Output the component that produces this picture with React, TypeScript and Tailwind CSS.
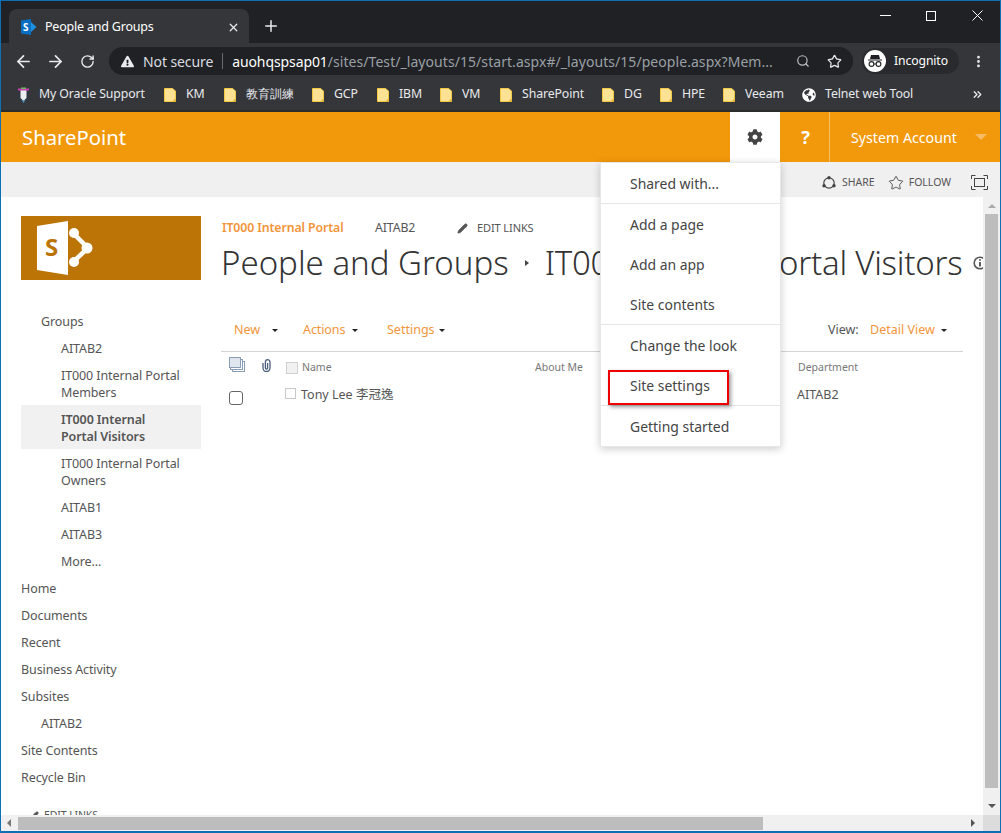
import { ArrowLeft, ArrowRight, RotateCw, Search, Star, Plus, X, MoreVertical, ChevronsRight, Pencil } from "lucide-react";
import { FaCog, FaGlobeAmericas, FaExclamationTriangle } from "react-icons/fa";

const ui = "font-['Noto_Sans','Open_Sans',sans-serif]";

function Folder() {
  return (
    <svg width="12" height="14" viewBox="0 0 12 14" className="shrink-0">
      <path d="M0.5 0.5H8.5L11.5 3V13.5H0.5Z" fill="#fde293" stroke="#f5c842" />
      <path d="M9 13L11.5 10.5V13.5H9Z" fill="#e0b030" />
    </svg>
  );
}

function SpLogo({ className, fg, accent }: { className?: string; fg: string; accent: string }) {
  return (
    <svg viewBox="0 0 56 54" className={className}>
      <path d="M0 5L31 0V54L0 49Z" fill={fg} />
      <text x="8" y="35" fontSize="24" fontWeight="700" fontFamily="Noto Sans" fill={accent}>S</text>
      <path d="M36 12L51 27L36 41" fill="none" stroke={fg} strokeWidth="4.5" />
      <circle cx="37" cy="12" r="5" fill={fg} />
      <circle cx="37" cy="41" r="5" fill={fg} />
      <circle cx="50" cy="27" r="5.5" fill={fg} />
    </svg>
  );
}

function Bookmark({ label, width }: { label: string; width: string }) {
  return (
    <div className={`flex items-center gap-[10px] ${width}`}>
      <Folder />
      <span>{label}</span>
    </div>
  );
}

function Caret({ className = "" }: { className?: string }) {
  return <span className={`inline-block w-0 h-0 border-x-[3px] border-x-transparent border-t-[3px] border-t-[#222] ${className}`} />;
}

function NavItem({ children, indent = 0, selected = false }: { children: React.ReactNode; indent?: number; selected?: boolean }) {
  const pad = indent === 2 ? "pl-10" : indent === 1 ? "pl-5" : "pl-0";
  return (
    <div className={`${pad} leading-[17px] pr-2 ${selected ? "-mt-px mb-px pt-[6px] pb-[4px] bg-[#f1f1f1] font-semibold text-[#555]" : "py-[5px]"}`}>{children}</div>
  );
}

function MenuItem({ label }: { label: string }) {
  return <div className="h-10 flex items-center pl-[29px] pt-[2px]">{label}</div>;
}

export default function App() {
  return (
    <div className={`relative w-[1001px] h-[833px] overflow-hidden flex flex-col border-t border-x border-b-2 border-[#0f6fb5] bg-white ${ui}`}>
      {/* title bar */}
      <div className="h-[42px] shrink-0 bg-[#202124] flex items-end pl-2 text-white">
        <div className="w-60 h-[34px] bg-[#35363a] rounded-t-lg flex items-center pl-3 pr-[9px] pt-[2px] text-[12.5px]">
          <svg width="16" height="16" viewBox="0 0 16 16" className="mr-2 shrink-0">
            <path d="M0 1.5L10 0V16L0 14.5Z" fill="#0a6fc2" />
            <path d="M10 3L15.5 8L10 13Z" fill="#1d8fe0" />
            <text x="2" y="12" fontSize="10" fontWeight="700" fontFamily="Noto Sans" fill="#fff">S</text>
          </svg>
          <span className="flex-1 tracking-[-0.2px]">People and Groups</span>
          <X size={13} strokeWidth={2.4} className="text-[#e8eaed]" />
        </div>
        <Plus size={18} strokeWidth={2} className="ml-[13px] mb-[8px] text-[#e8eaed]" />
        <div className="ml-auto flex items-center self-start h-[29px] text-white">
          <svg width="11" height="1" className="mr-[35px]"><rect width="11" height="1" fill="#fff" /></svg>
          <svg width="10" height="10" className="mr-[36px]"><rect x="0.5" y="0.5" width="9" height="9" fill="none" stroke="#fff" /></svg>
          <svg width="11" height="11" className="mr-[17px]"><path d="M0.5 0.5L10.5 10.5M10.5 0.5L0.5 10.5" stroke="#fff" /></svg>
        </div>
      </div>

      {/* toolbar */}
      <div className="h-[34px] shrink-0 bg-[#35363a] flex items-center text-[#e8eaed] pl-[13px]">
        <ArrowLeft size={19} strokeWidth={2.2} className="mt-[2px]" />
        <ArrowRight size={19} strokeWidth={2.2} className="ml-[13px] mt-[2px]" />
        <RotateCw size={15} strokeWidth={2.2} className="ml-[15px] mt-[2px]" />
        <div className="ml-[14px] w-[744px] h-7 mt-[2px] rounded-full bg-[#202124] flex items-center pl-[12px] text-[14px] tracking-[-0.1px] whitespace-nowrap">
          <FaExclamationTriangle size={13} className="text-[#e8eaed] shrink-0" />
          <span className="ml-[9px] text-[#dadce0]">Not secure</span>
          <span className="ml-[9px] mr-[9px] w-px h-[16px] bg-[#6a6c70] shrink-0" />
          <span className="text-white">auohqspsap01</span>
          <span className="text-[#9aa0a6] w-[468px] tracking-[0.06px]">/sites/Test/_layouts/15/start.aspx#/_layouts/15/people.aspx?Mem...</span>
          <Search size={14} className="text-[#bdc1c6] shrink-0" />
          <Star size={15} className="ml-[17px] text-[#e8eaed] shrink-0" />
        </div>
        <div className="ml-[9px] w-[97px] h-[26px] mt-[2px] rounded-full bg-[#292a2d] flex items-center pl-[2px] text-[12.2px] text-white tracking-[-0.1px]">
          <span className="w-[22px] h-[22px] rounded-full bg-white flex items-center justify-center">
            <svg width="16" height="14" viewBox="0 0 16 14">
              <path d="M4 1H12L13 5H3Z M1 5.4H15V6.4H1Z" fill="#202124" />
              <circle cx="4.5" cy="10" r="2.4" fill="none" stroke="#202124" strokeWidth="1.1" />
              <circle cx="11.5" cy="10" r="2.4" fill="none" stroke="#202124" strokeWidth="1.1" />
              <path d="M7 10H9" stroke="#202124" />
            </svg>
          </span>
          <span className="ml-2">Incognito</span>
        </div>
        <MoreVertical size={15} strokeWidth={2.5} className="ml-[12px] mt-[2px]" />
      </div>

      {/* bookmarks */}
      <div className="h-[33px] shrink-0 bg-[#35363a] flex items-center text-[12.3px] text-[#e8eaed] pl-[16px] pt-[2px] tracking-[-0.1px]">
        <div className="flex items-center gap-[9px] w-[147px]">
          <svg width="13" height="16" viewBox="0 0 13 16" className="shrink-0">
            <path d="M1 3H12V10C12 13 6.5 16 6.5 16C6.5 16 1 13 1 10Z" fill="#2f3640" />
            <path d="M3.5 3H9.5V11L6.5 14L3.5 11Z" fill="#eceef0" />
            <path d="M1 1.5H12V3.5H1Z" fill="#c93fb0" />
            <path d="M4 0.5H9V2H4Z" fill="#6bbf59" />
            <path d="M4.5 13.2H8.5L6.5 16Z" fill="#4a8fb5" />
          </svg>
          <span>My Oracle Support</span>
        </div>
        <Bookmark label="KM" width="w-[60px]" />
        <Bookmark label="教育訓練" width="w-[88px]" />
        <Bookmark label="GCP" width="w-[65px]" />
        <Bookmark label="IBM" width="w-[63px]" />
        <Bookmark label="VM" width="w-[60px]" />
        <Bookmark label="SharePoint" width="w-[102px]" />
        <Bookmark label="DG" width="w-[58px]" />
        <Bookmark label="HPE" width="w-[63px]" />
        <Bookmark label="Veeam" width="w-[79px]" />
        <div className="flex items-center gap-[9px] w-[169px]">
          <FaGlobeAmericas size={14} className="text-white" />
          <span>Telnet web Tool</span>
        </div>
        <ChevronsRight size={13} strokeWidth={2.5} className="text-[#e8eaed]" />
      </div>

      {/* suite bar */}
      <div className="h-[52px] shrink-0 bg-[#f2980b] border-t-2 border-[#2b2b2b] flex text-white">
        <div className="pl-[21px] text-[20.3px] leading-[51px] flex-1">SharePoint</div>
        <div className="w-[50px] bg-white flex items-center justify-center text-[#444]">
          <FaCog size={16} className="-mt-px" />
        </div>
        <div className="w-[50px] flex items-center justify-center pl-[2px] border-r border-[#f7bd66] text-[18px] font-bold">?</div>
        <div className="w-[170px] flex items-center pl-[21px] pt-[2px] text-[14.2px]">
          System Account
          <span className="ml-[18px] -mt-[2px] w-0 h-0 border-x-[6px] border-x-transparent border-t-[6px] border-t-[#f7bd66]" />
        </div>
      </div>

      {/* ribbon */}
      <div className="h-[35px] shrink-0 bg-[#f0f0f0] flex items-center justify-end pt-[7px] text-[10.5px] text-[#555] pr-[12px]">
        <svg width="14" height="14" viewBox="0 0 14 14" className="mr-[6px]">
          <circle cx="7" cy="7" r="5.2" fill="none" stroke="#444" strokeWidth="1.2" />
          <circle cx="7" cy="1.8" r="1.7" fill="#444" />
          <circle cx="2" cy="9.8" r="1.7" fill="#444" />
          <circle cx="12" cy="9.8" r="1.7" fill="#444" />
        </svg>
        <span>SHARE</span>
        <Star size={16} strokeWidth={1.2} className="ml-[13px] mr-[5px] text-[#333]" />
        <span>FOLLOW</span>
        <svg width="17" height="15" viewBox="0 0 17 15" className="ml-[20px] -mt-[2px]" fill="none" stroke="#444">
          <path d="M0.5 4V0.5H4.5M12.5 0.5H16.5V4M16.5 11V14.5H12.5M4.5 14.5H0.5V11" />
          <rect x="3.5" y="3.5" width="10" height="8" />
        </svg>
      </div>

      {/* page with scrollbars */}
      <div className="flex-1 min-h-0 grid grid-cols-[982px_17px] grid-rows-[618px_16px]">
        <div className="overflow-hidden flex text-[13px] text-[#555]">
          <aside className="ml-5 w-[180px] shrink-0 pt-[19px]">
            <div className="h-16 bg-[#bd7406] pl-4 flex items-center">
              <SpLogo className="w-14 h-[54px]" fg="#fff" accent="#bd7406" />
            </div>
            <nav className="mt-[28px] text-[12.5px] tracking-[-0.1px]">
              <NavItem indent={1}>Groups</NavItem>
              <NavItem indent={2}>AITAB2</NavItem>
              <NavItem indent={2}>IT000 Internal Portal<br />Members</NavItem>
              <NavItem indent={2} selected>IT000 Internal<br />Portal Visitors</NavItem>
              <NavItem indent={2}>IT000 Internal Portal<br />Owners</NavItem>
              <NavItem indent={2}>AITAB1</NavItem>
              <NavItem indent={2}>AITAB3</NavItem>
              <NavItem indent={2}>More...</NavItem>
              <NavItem>Home</NavItem>
              <NavItem>Documents</NavItem>
              <NavItem>Recent</NavItem>
              <NavItem>Business Activity</NavItem>
              <NavItem>Subsites</NavItem>
              <NavItem indent={1}>AITAB2</NavItem>
              <NavItem>Site Contents</NavItem>
              <NavItem>Recycle Bin</NavItem>
              <div className="mt-[17px] pl-[8px] flex items-center gap-[5px] text-[10.5px]">
                <Pencil size={10} className="fill-[#555]" />
                EDIT LINKS
              </div>
            </nav>
          </aside>

          <main className="ml-5 w-[742px] shrink-0">
            <div className="mt-[22px] h-[18px] pl-px flex items-center text-[12.3px] tracking-[-0.1px]">
              <span className="font-semibold text-[#f2953a] w-[153px]">IT000 Internal Portal</span>
              <span className="w-[82px]">AITAB2</span>
              <Pencil size={11} className="fill-[#555] mr-[9px]" />
              <span className="text-[11px]">EDIT LINKS</span>
            </div>
            <div className="mt-[2px] h-[48px] flex items-center text-[33px] font-light text-[#333] whitespace-nowrap">
              <span>People and Groups</span>
              <span className="ml-4 mr-4 w-0 h-0 border-y-[3px] border-y-transparent border-l-[4px] border-l-[#444]" />
              <span className="tracking-[-0.25px]">IT000 Internal Portal Visitors</span>
              <svg width="14" height="14" viewBox="0 0 14 14" className="ml-[11px] shrink-0">
                <circle cx="7" cy="7" r="5.8" fill="none" stroke="#555" strokeWidth="1.6" />
                <path d="M7 6V10.5M7 3.2V4.8" stroke="#555" strokeWidth="1.9" />
              </svg>
            </div>
            <div className="mt-[26px] h-[39px] pb-[3px] flex items-center border-b border-[#d4d4d4] text-[12.5px] text-[#f2953a]">
              <span className="ml-[13px] w-[38px]">New</span>
              <Caret />
              <span className="ml-[25px] w-[48px] tracking-[-0.1px]">Actions</span>
              <Caret className="ml-px" />
              <span className="ml-[29px] w-[50px]">Settings</span>
              <Caret className="ml-[2px]" />
              <span className="ml-auto text-[#555] w-[42px]">View:</span>
              <span className="w-[71px]">Detail View</span>
              <Caret className="mr-[16px]" />
            </div>
            <div className="h-[32px] flex items-center text-[10.5px] text-[#777]">
              <svg width="16" height="15" viewBox="0 0 16 15" className="ml-2 mb-[7px] shrink-0" fill="#fff" stroke="#8b9db5">
                <rect x="3.5" y="4.5" width="12" height="10" />
                <rect x="1.5" y="2.5" width="12" height="10" />
                <rect x="0.5" y="0.5" width="11" height="10" fill="#dfe6ee" />
              </svg>
              <svg width="9" height="13" viewBox="0 0 9 13" className="ml-[17px] mb-[5px] shrink-0" fill="none" stroke="#4b5f7c" strokeWidth="1.3">
                <path d="M1 4V9A3.5 3.5 0 0 0 8 9V3A2.3 2.3 0 0 0 3.4 3V9A1.1 1.1 0 0 0 5.6 9V4" />
              </svg>
              <span className="ml-[15px] w-3 h-3 border border-[#d0d0d0] bg-[#f1f1f1]" />
              <span className="ml-1 w-[233px]">Name</span>
              <span className="w-[263px]">About Me</span>
              <span>Department</span>
            </div>
            <div className="h-6 -mt-px flex items-center text-[12.5px]">
              <span className="ml-2 mt-[6px] w-[14px] h-[14px] rounded-[3px] border border-[#666] bg-white" />
              <span className="ml-[42px] mb-[3px] w-[11px] h-[11px] border border-[#c8c8c8]" />
              <span className="ml-[5px] w-[496px] font-['Noto_Sans','Noto_Sans_CJK_TC',sans-serif]">Tony Lee 李冠逸</span>
              <span>AITAB2</span>
            </div>
          </main>
        </div>

        {/* vertical scrollbar */}
        <div className="bg-[#f0f0f0] flex flex-col items-center text-[#777]">
          <span className="mt-[7px] w-0 h-0 border-x-[4px] border-x-transparent border-b-[4px] border-b-[#aaa]" />
          <div className="mt-[6px] w-[13px] h-[574px] bg-[#bdbdbd]" />
          <span className="mt-[16px] w-0 h-0 border-x-[4px] border-x-transparent border-t-[4px] border-t-[#555]" />
        </div>
        {/* horizontal scrollbar */}
        <div className="bg-[#f0f0f0] flex items-center">
          <span className="ml-[6px] w-0 h-0 border-y-[4px] border-y-transparent border-r-[4px] border-r-[#777]" />
          <div className="ml-[7px] h-[13px] w-[745px] bg-[#bdbdbd]" />
          <span className="ml-auto mr-[8px] w-0 h-0 border-y-[4px] border-y-transparent border-l-[4px] border-l-[#555]" />
        </div>
        <div className="bg-[#dcdcdc]" />
      </div>

      {/* settings menu */}
      <div className="absolute left-[599px] top-[161px] w-[181px] h-[285px] bg-white border border-[#e8e8e8] shadow-[0_2px_8px_rgba(0,0,0,0.2)] text-[13.95px] text-[#444]">
        <MenuItem label="Shared with..." />
        <div className="border-t border-[#e6e6e6]" />
        <MenuItem label="Add a page" />
        <MenuItem label="Add an app" />
        <MenuItem label="Site contents" />
        <div className="border-t border-[#e6e6e6]" />
        <MenuItem label="Change the look" />
        <MenuItem label="Site settings" />
        <div className="border-t border-[#e6e6e6]" />
        <MenuItem label="Getting started" />
        <div className="absolute left-[7px] top-[207px] w-[121px] h-[35px] border-2 border-[#ee0000] shadow-[2px_2px_4px_rgba(0,0,0,0.4)]" />
      </div>
    </div>
  );
}
